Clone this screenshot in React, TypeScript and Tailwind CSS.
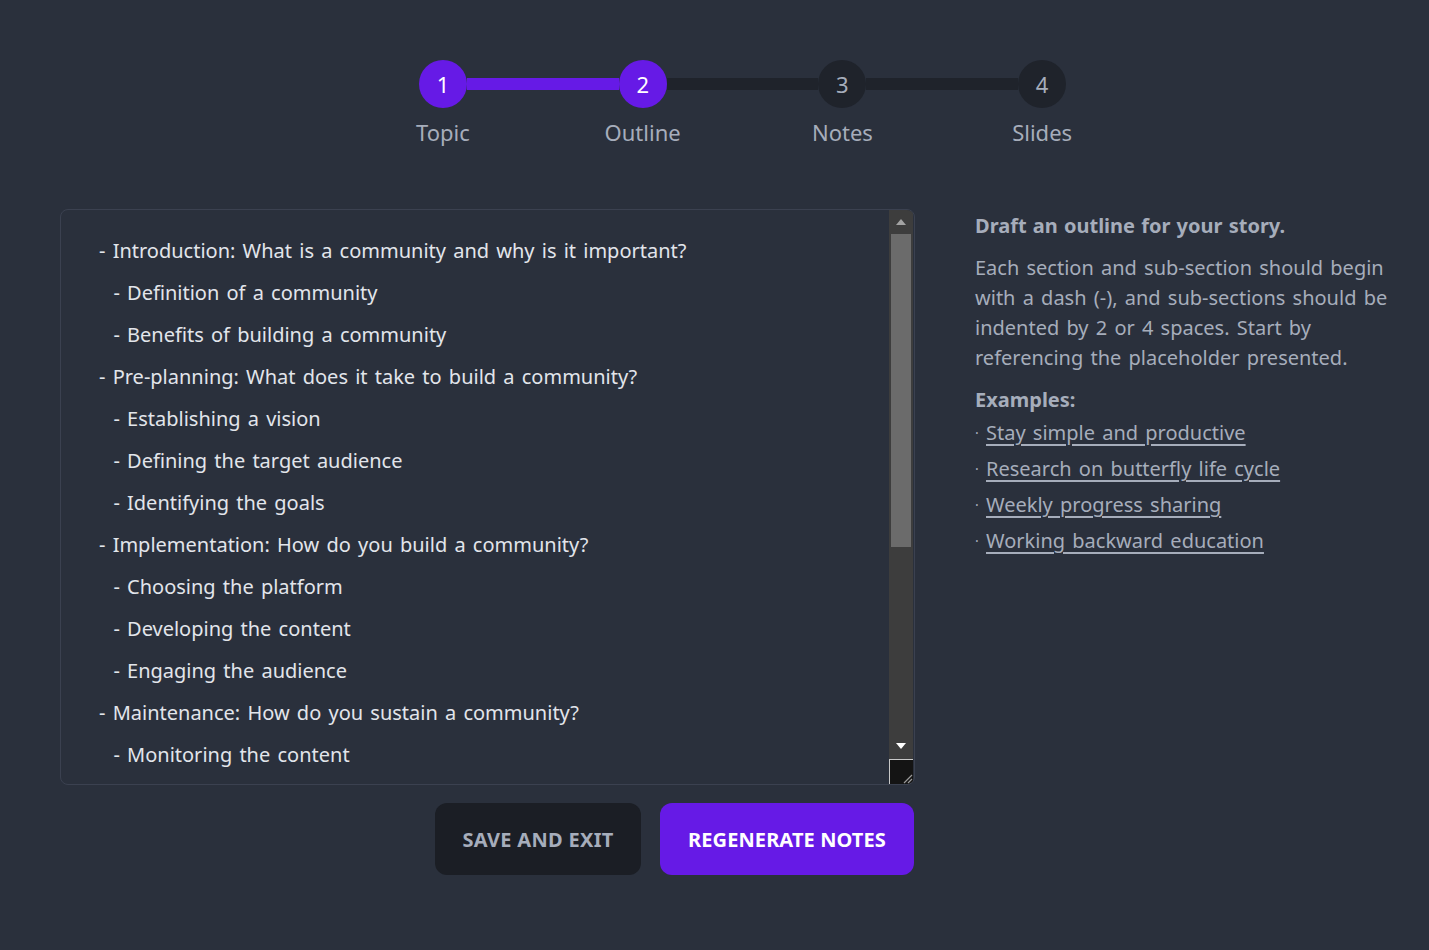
import React from "react";

const lines = [
  "- Introduction: What is a community and why is it important?",
  "  - Definition of a community",
  "  - Benefits of building a community",
  "- Pre-planning: What does it take to build a community?",
  "  - Establishing a vision",
  "  - Defining the target audience",
  "  - Identifying the goals",
  "- Implementation: How do you build a community?",
  "  - Choosing the platform",
  "  - Developing the content",
  "  - Engaging the audience",
  "- Maintenance: How do you sustain a community?",
  "  - Monitoring the content",
];

const steps = ["Topic", "Outline", "Notes", "Slides"];

export default function App() {
  return (
    <div
      className="min-h-screen w-full bg-[#2a303c] text-[#a6adbb] [word-spacing:2px]"
      style={{ fontFamily: '"Noto Sans", "Noto Sans CJK KR", sans-serif' }}
    >
      <div className="pt-[60px] ml-[343px] w-[799px]">
        <div className="flex items-center px-[76px]">
          <div className="w-[48px] h-[48px] rounded-full bg-[#661ae6] text-white flex items-center justify-center text-[22px] shrink-0">1</div>
          <div className="flex-1 h-[12px] bg-[#661ae6]" />
          <div className="w-[48px] h-[48px] rounded-full bg-[#661ae6] text-white flex items-center justify-center text-[22px] shrink-0">2</div>
          <div className="flex-1 h-[12px] bg-[#1f232b]" />
          <div className="w-[48px] h-[48px] rounded-full bg-[#1f232b] text-[#a6adbb] flex items-center justify-center text-[22px] shrink-0">3</div>
          <div className="flex-1 h-[12px] bg-[#1f232b]" />
          <div className="w-[48px] h-[48px] rounded-full bg-[#1f232b] text-[#a6adbb] flex items-center justify-center text-[22px] shrink-0">4</div>
        </div>
        <div className="grid grid-cols-4 mt-[8px]">
          {steps.map((s) => (
            <div key={s} className="text-center text-[22px] leading-[32px]">{s}</div>
          ))}
        </div>
      </div>

      <div className="flex mt-[61px] pl-[60px]">
        <div className="w-[855px] flex flex-col">
          <div className="h-[576px] border border-[#3b4150] rounded-[8px] flex overflow-hidden">
            <div className="flex-1 overflow-hidden pt-[20px] pl-[38px]">
              {lines.map((l, i) => (
                <div key={i} className="whitespace-pre text-[20px] leading-[42px] text-[#e2e5eb]">{l}</div>
              ))}
            </div>
            <div className="w-[24px] flex flex-col bg-[#3d3d3d] mr-[1px]">
              <div className="h-[24px] flex items-center justify-center">
                <svg width="10" height="6" viewBox="0 0 10 6"><path d="M5 0 L10 6 L0 6 Z" fill="#a3a3a3" /></svg>
              </div>
              <div className="mx-[2px] h-[313px] bg-[#6b6b6b]" />
              <div className="flex-1" />
              <div className="h-[26px] flex items-center justify-center">
                <svg width="10" height="6" viewBox="0 0 10 6"><path d="M0 0 L10 0 L5 6 Z" fill="#ffffff" /></svg>
              </div>
              <div className="h-[25px] bg-[#141414] border-l border-t border-[#c8c8c8] flex items-end justify-end">
                <svg width="12" height="12" viewBox="0 0 12 12">
                  <path d="M3 11 L11 3 M7 11 L11 7" stroke="#9a9a9a" strokeWidth="1.2" />
                </svg>
              </div>
            </div>
          </div>
          <div className="flex justify-end gap-[19px] mt-[18px] pr-[1px]">
            <button className="h-[72px] w-[206px] rounded-[12px] bg-[#1b1e25] text-[#a6adbb] text-[20px] font-bold uppercase tracking-[0.3px] whitespace-nowrap pt-[2px]">Save and exit</button>
            <button className="h-[72px] w-[254px] rounded-[12px] bg-[#661ae6] text-white text-[20px] font-bold uppercase tracking-[0.1px] whitespace-nowrap pt-[2px]">Regenerate notes</button>
          </div>
        </div>

        <div className="ml-[60px] w-[425px] pt-[2px]">
          <div className="text-[20px] font-bold leading-[30px] [word-spacing:1px]">Draft an outline for your story.</div>
          <p className="mt-[12px] text-[20px] leading-[30px]">
            Each section and sub-section should begin with a dash (-), and sub-sections should be indented by 2 or 4 spaces. Start by referencing the placeholder presented.
          </p>
          <div className="mt-[12px] text-[20px] font-bold leading-[30px]">Examples:</div>
          <ul className="text-[20px] leading-[36px]">
            {[
              "Stay simple and productive",
              "Research on butterfly life cycle",
              "Weekly progress sharing",
              "Working backward education",
            ].map((e) => (
              <li key={e} className="flex">
                <span className="w-[11px] text-[14px]">·</span>
                <a className="underline underline-offset-[4px] cursor-pointer">{e}</a>
              </li>
            ))}
          </ul>
        </div>
      </div>
    </div>
  );
}
